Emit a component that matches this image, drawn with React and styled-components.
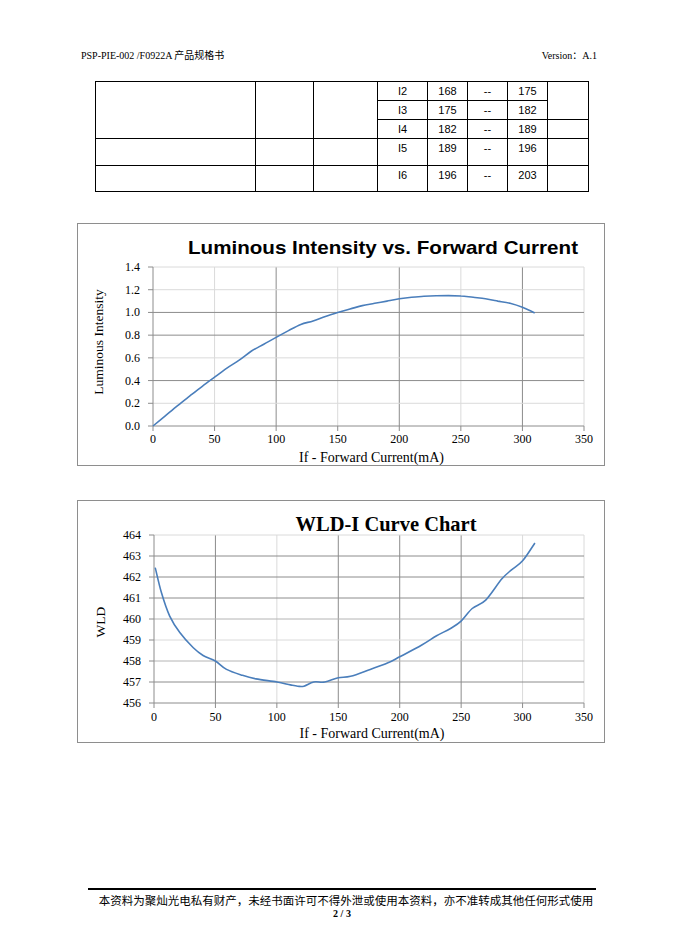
import React from "react";
import styled, { createGlobalStyle } from "styled-components";

const GlobalStyle = createGlobalStyle`
  html, body {
    margin: 0;
    padding: 0;
    background: #ffffff;
  }
`;

const Page = styled.div`
  width: 680px;
  height: 944px;
  box-sizing: border-box;
  padding-top: 49px;
  display: flex;
  flex-direction: column;
  font-family: "Liberation Serif", "Noto Sans CJK SC", serif;
  color: #000;
`;

const Header = styled.header`
  display: flex;
  justify-content: space-between;
  padding: 0 83px 0 81px;
  font-size: 10px;
  line-height: 14px;
`;

const SpecTable = styled.table`
  margin: 18px 0 0 95px;
  width: 493px;
  border-collapse: collapse;
  table-layout: fixed;
  font-family: "Liberation Sans", "Open Sans", sans-serif;
  font-size: 11px;

  td {
    border: 1px solid #000;
    padding: 0;
    text-align: center;
    vertical-align: top;
    line-height: 18px;
  }
`;

const Row = styled.tr`
  height: ${(p) => p.$h}px;
`;

const Col = styled.col`
  width: ${(p) => p.$w}px;
`;

const Frame = styled.div`
  margin: ${(p) => p.$top}px 0 0 77px;
  width: 528px;
  height: 243px;
  box-sizing: border-box;
  border: 1px solid #8e8e8e;
  background: #fff;

  svg {
    display: block;
  }
`;

const Footer = styled.footer`
  margin: auto 84px 0 88px;
  border-top: 2px solid #000;
  padding: 2px 0 24px;
  text-align: center;
`;

const Notice = styled.div`
  font-family: "Noto Sans CJK SC", sans-serif;
  font-size: 11.5px;
  line-height: 16px;
  padding-left: 8px;
`;

const PageNo = styled.div`
  font-size: 10px;
  font-weight: bold;
  line-height: 12px;
`;

const DARK = "#8c8c8c";
const MID = "#b4b4b4";
const LIGHT = "#dadada";

function smoothPath(pts) {
  let d = `M${pts[0][0].toFixed(1)},${pts[0][1].toFixed(1)}`;
  for (let i = 0; i < pts.length - 1; i++) {
    const p0 = pts[i - 1] || pts[i];
    const p1 = pts[i];
    const p2 = pts[i + 1];
    const p3 = pts[i + 2] || p2;
    const c1x = p1[0] + (p2[0] - p0[0]) / 6;
    const c1y = p1[1] + (p2[1] - p0[1]) / 6;
    const c2x = p2[0] - (p3[0] - p1[0]) / 6;
    const c2y = p2[1] - (p3[1] - p1[1]) / 6;
    d += ` C${c1x.toFixed(1)},${c1y.toFixed(1)} ${c2x.toFixed(1)},${c2y.toFixed(1)} ${p2[0].toFixed(1)},${p2[1].toFixed(1)}`;
  }
  return d;
}

function Chart({ cfg }) {
  const { plot, yMin, yMax, yTicks, yFormat, vGrid, hGrid, data } = cfg;
  const sx = (v) => plot.left + (v / 350) * (plot.right - plot.left);
  const sy = (v) =>
    plot.bottom - ((v - yMin) / (yMax - yMin)) * (plot.bottom - plot.top);
  const xTicks = [0, 50, 100, 150, 200, 250, 300, 350];
  const pts = data.map(([x, y]) => [sx(x), sy(y)]);

  return (
    <Frame $top={cfg.top}>
      <svg width="526" height="241" viewBox="0 0 526 241">
        <text
          x={cfg.titleX}
          y={cfg.titleY}
          textAnchor="middle"
          fontFamily={cfg.titleFont}
          fontWeight="bold"
          fontSize={cfg.titleSize}
          textLength={cfg.titleWidth}
          lengthAdjust="spacingAndGlyphs"
        >
          {cfg.title}
        </text>

        {xTicks.slice(1).map((v, i) => (
          <line
            key={"v" + v}
            x1={sx(v)}
            x2={sx(v)}
            y1={plot.top}
            y2={plot.bottom}
            stroke={vGrid[i]}
            strokeWidth="1"
          />
        ))}
        {yTicks.slice(1).map((v, i) => (
          <line
            key={"h" + v}
            x1={plot.left}
            x2={plot.right}
            y1={sy(v)}
            y2={sy(v)}
            stroke={hGrid[i]}
            strokeWidth="1"
          />
        ))}

        <line x1={plot.left} x2={plot.left} y1={plot.top} y2={plot.bottom} stroke={DARK} />
        <line x1={plot.left} x2={plot.right} y1={plot.bottom} y2={plot.bottom} stroke={DARK} />

        {yTicks.map((v) => (
          <g key={"yt" + v}>
            <line x1={plot.left - 5} x2={plot.left} y1={sy(v)} y2={sy(v)} stroke={DARK} />
            <text
              x={plot.left - 13}
              y={sy(v) + 4}
              textAnchor="end"
              fontFamily="Liberation Serif, serif"
              fontSize="12"
            >
              {yFormat(v)}
            </text>
          </g>
        ))}
        {xTicks.map((v) => (
          <g key={"xt" + v}>
            <line x1={sx(v)} x2={sx(v)} y1={plot.bottom} y2={plot.bottom + 5} stroke={DARK} />
            <text
              x={sx(v)}
              y={cfg.xLabelY}
              textAnchor="middle"
              fontFamily="Liberation Serif, serif"
              fontSize="12"
            >
              {v}
            </text>
          </g>
        ))}

        <text
          x={(plot.left + plot.right) / 2 + 3}
          y={cfg.xTitleY}
          textAnchor="middle"
          fontFamily="Liberation Serif, serif"
          fontSize="14"
        >
          If - Forward Current(mA)
        </text>
        <text
          transform={`translate(${cfg.yTitleX} ${cfg.yTitleY}) rotate(-90)`}
          textAnchor="middle"
          fontFamily="Liberation Serif, serif"
          fontSize="13.5"
        >
          {cfg.yTitle}
        </text>

        <path d={smoothPath(pts)} fill="none" stroke="#4a7ebb" strokeWidth="1.6" />
      </svg>
    </Frame>
  );
}

const intensity = {
  top: 31,
  title: "Luminous Intensity vs. Forward Current",
  titleFont: "Liberation Sans, Arial, sans-serif",
  titleSize: 19,
  titleWidth: 390,
  titleX: 305,
  titleY: 30,
  plot: { left: 75, right: 506, top: 43, bottom: 202 },
  yMin: 0,
  yMax: 1.4,
  yTicks: [0, 0.2, 0.4, 0.6, 0.8, 1.0, 1.2, 1.4],
  yFormat: (v) => v.toFixed(1),
  vGrid: [LIGHT, DARK, LIGHT, DARK, LIGHT, DARK, LIGHT],
  hGrid: [LIGHT, DARK, LIGHT, DARK, DARK, LIGHT, LIGHT],
  xLabelY: 219,
  xTitleY: 238,
  yTitle: "Luminous Intensity",
  yTitleX: 25,
  yTitleY: 118,
  data: [
    [0, 0], [10, 0.09], [20, 0.18], [30, 0.265], [40, 0.35], [50, 0.43],
    [60, 0.51], [70, 0.58], [80, 0.66], [90, 0.72], [100, 0.78], [110, 0.84],
    [120, 0.895], [130, 0.925], [140, 0.965], [150, 1.0], [160, 1.03],
    [170, 1.06], [180, 1.08], [190, 1.1], [200, 1.12], [210, 1.133],
    [220, 1.142], [230, 1.146], [240, 1.148], [250, 1.145], [260, 1.133],
    [270, 1.12], [280, 1.1], [290, 1.08], [300, 1.045], [310, 0.995],
  ],
};

const wld = {
  top: 34,
  title: "WLD-I Curve Chart",
  titleFont: "Liberation Serif, serif",
  titleSize: 21,
  titleWidth: 181,
  titleX: 308,
  titleY: 30,
  plot: { left: 76, right: 506, top: 34, bottom: 202 },
  yMin: 456,
  yMax: 464,
  yTicks: [456, 457, 458, 459, 460, 461, 462, 463, 464],
  yFormat: (v) => String(v),
  vGrid: [DARK, LIGHT, DARK, DARK, DARK, LIGHT, LIGHT],
  hGrid: [DARK, MID, LIGHT, MID, DARK, DARK, DARK, LIGHT],
  xLabelY: 220,
  xTitleY: 237,
  yTitle: "WLD",
  yTitleX: 27,
  yTitleY: 121,
  data: [
    [1, 462.45], [6, 461.26], [12.8, 460.14], [21, 459.35], [32, 458.63],
    [40, 458.26], [50, 458.0], [59, 457.6], [72, 457.32], [83, 457.15],
    [100, 457.0], [111, 456.86], [117, 456.8], [122, 456.8], [130, 457.0],
    [139, 457.0], [150, 457.2], [160, 457.27], [176, 457.6], [190, 457.9],
    [200, 458.2], [218, 458.76], [230, 459.2], [241, 459.54], [250, 459.9],
    [259, 460.5], [270, 460.9], [283, 461.9], [291, 462.34], [300, 462.77],
    [310, 463.62],
  ],
};

const bins = [
  ["I2", "168", "--", "175"],
  ["I3", "175", "--", "182"],
  ["I4", "182", "--", "189"],
  ["I5", "189", "--", "196"],
  ["I6", "196", "--", "203"],
];

function BinCells({ bin }) {
  return bin.map((v, i) => <td key={i}>{v}</td>);
}

export default function App() {
  return (
    <Page>
      <GlobalStyle />
      <Header>
        <span>PSP-PIE-002 /F0922A 产品规格书</span>
        <span>Version：A.1</span>
      </Header>

      <SpecTable>
        <colgroup>
          <Col $w={160} />
          <Col $w={58} />
          <Col $w={64} />
          <Col $w={50} />
          <Col $w={40} />
          <Col $w={40} />
          <Col $w={40} />
          <Col $w={41} />
        </colgroup>
        <tbody>
          <Row $h={19}>
            <td rowSpan={3} />
            <td rowSpan={3} />
            <td rowSpan={3} />
            <BinCells bin={bins[0]} />
            <td rowSpan={2} />
          </Row>
          <Row $h={18}>
            <BinCells bin={bins[1]} />
          </Row>
          <Row $h={19}>
            <BinCells bin={bins[2]} />
            <td />
          </Row>
          <Row $h={27}>
            <td />
            <td />
            <td />
            <BinCells bin={bins[3]} />
            <td />
          </Row>
          <Row $h={26}>
            <td />
            <td />
            <td />
            <BinCells bin={bins[4]} />
            <td />
          </Row>
        </tbody>
      </SpecTable>

      <Chart cfg={intensity} />
      <Chart cfg={wld} />

      <Footer>
        <Notice>
          本资料为聚灿光电私有财产，未经书面许可不得外泄或使用本资料，亦不准转成其他任何形式使用
        </Notice>
        <PageNo>2 / 3</PageNo>
      </Footer>
    </Page>
  );
}
